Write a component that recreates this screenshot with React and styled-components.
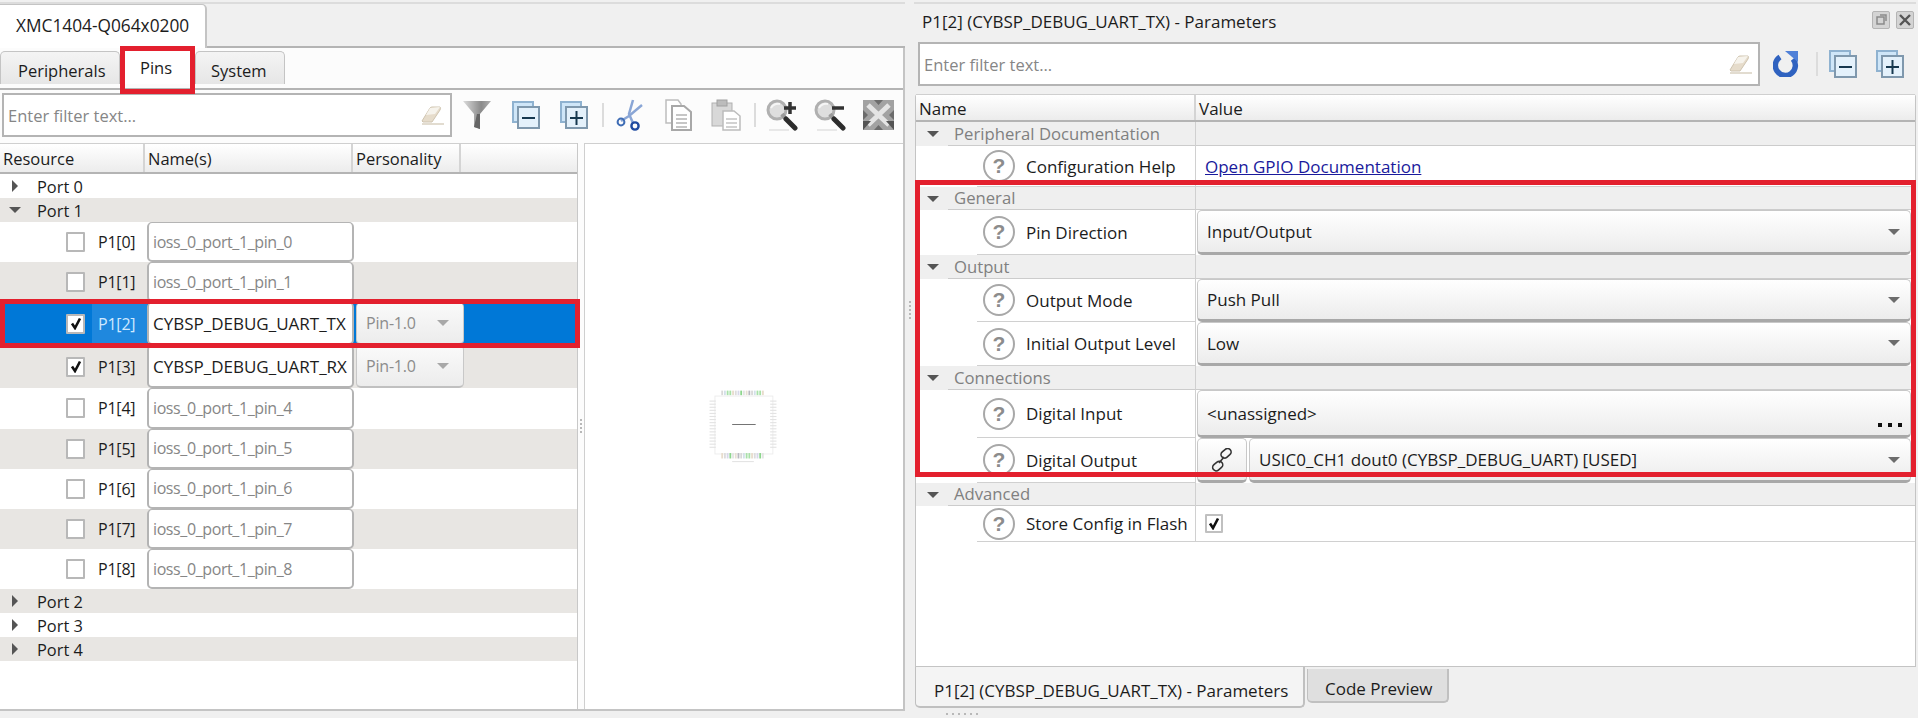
import React from "react";
import styled, { createGlobalStyle } from "styled-components";

const FONT = `"Open Sans", "Noto Sans", "Liberation Sans", sans-serif`;
const RED = "#e3202e";

const GlobalStyle = createGlobalStyle`
  html, body { margin: 0; padding: 0; background: #f0f0f0; }
  * { box-sizing: border-box; }
`;

const Page = styled.div`
  position: relative;
  width: 1918px;
  height: 718px;
  overflow: hidden;
  display: flex;
  background: #f0f0f0;
  font-family: ${FONT};
  font-size: 17px;
  color: #1c1c1c;
  padding-top: 2px;
`;

const Highlight = styled.div`
  position: absolute;
  left: ${(p) => p.$x}px;
  top: ${(p) => p.$y}px;
  width: ${(p) => p.$w}px;
  height: ${(p) => p.$h}px;
  border: 5px solid ${RED};
  pointer-events: none;
  z-index: 10;
`;

/* left side */
const LeftPanel = styled.div`
  width: 905px;
  height: 709px;
  display: flex;
  flex-direction: column;
  border-top: 2px solid #dcdcdc;
`;

const EditorTabBar = styled.div`
  height: 44px;
  flex: none;
  display: flex;
  border-bottom: 2px solid #b4b4b4;
`;

const EditorTab = styled.div`
  width: 207px;
  height: 44px;
  background: #fff;
  border: 1px solid #c4c4c4;
  border-width: 1px 2px 0 0;
  border-top-right-radius: 5px;
  padding: 9px 0 0 16px;
  font-size: 17.3px;
`;

const LeftBody = styled.div`
  flex: 1;
  display: flex;
  flex-direction: column;
  background: #fcfcfc;
  border-right: 2px solid #c4c4c4;
  border-bottom: 2px solid #c4c4c4;
  min-height: 0;
`;

const SubTabBar = styled.div`
  height: 42px;
  flex: none;
  display: flex;
  align-items: flex-end;
  padding-bottom: 4px;
  border-bottom: 2px solid #b4b4b4;
`;

const SubTab = styled.div`
  width: ${(p) => p.$w}px;
  height: ${(p) => (p.$active ? 37 : 33)}px;
  padding: ${(p) => (p.$active ? "9px" : "7px")} 0 0 ${(p) => p.$pad}px;
  background: ${(p) => (p.$active ? "#fff" : "linear-gradient(#f4f4f4, #e6e6e6)")};
  border: ${(p) => (p.$active ? "0" : "1px solid #c4c4c4")};
  border-bottom: 0;
  border-radius: 5px 5px 0 0;
  font-size: 16.5px;
`;

const ToolRow = styled.div`
  display: flex;
  align-items: flex-start;
  flex: none;
  padding: 3px 0 0 2px;
  height: 53px;
`;

const FilterBox = styled.div`
  width: ${(p) => p.$w}px;
  height: 44px;
  flex: none;
  background: #fff;
  border: 2px solid #b4b4b4;
  display: flex;
  align-items: center;
  justify-content: space-between;
  padding: 0 6px 0 4px;
  color: #868686;
  font-size: 16.5px;
`;

const ToolIcon = styled.div`
  width: ${(p) => p.$w || 48}px;
  height: 44px;
  flex: none;
  display: flex;
  align-items: center;
  justify-content: center;
`;

const ToolSep = styled.div`
  width: 2px;
  height: 24px;
  margin: 10px 2px 0 4px;
  flex: none;
  background: #dcdcdc;
`;

const Workspace = styled.div`
  flex: 1;
  display: flex;
  min-height: 0;
`;

const Tree = styled.div`
  width: 578px;
  flex: none;
  background: #fff;
  border-right: 1px solid #c8c8c8;
  display: flex;
  flex-direction: column;
`;

const HeaderRow = styled.div`
  height: 31px;
  flex: none;
  display: flex;
  background: linear-gradient(#fff, #ececec);
  border-top: 1px solid #cfcfcf;
  border-bottom: 2px solid #b4b4b4;
`;

const HeaderCell = styled.div`
  width: ${(p) => p.$w}px;
  padding-left: ${(p) => p.$pad ?? 3}px;
  border-right: ${(p) => (p.$last ? "0" : "2px solid #d4d4d4")};
  font-size: 16.5px;
  line-height: 30px;
  flex: ${(p) => (p.$last ? 1 : "none")};
`;

const PortRow = styled.div`
  height: 24px;
  flex: none;
  display: flex;
  align-items: center;
  padding-left: ${(p) => (p.$open ? 9 : 12)}px;
  background: ${(p) => (p.$alt ? "#e8e6e3" : "#fff")};
  font-size: 16.4px;
`;

const PortLabel = styled.span`
  margin-left: ${(p) => (p.$open ? 16 : 19)}px;
`;

const Arrow = styled.span`
  display: block;
  width: 0;
  height: 0;
  border-left: 6px solid #555;
  border-top: 6px solid transparent;
  border-bottom: 6px solid transparent;
`;

const ArrowDown = styled.span`
  display: block;
  width: 0;
  height: 0;
  border-top: 6px solid #555;
  border-left: 6px solid transparent;
  border-right: 6px solid transparent;
`;

const PinRowBox = styled.div`
  height: ${(p) => (p.$tall ? 43 : 40.2)}px;
  flex: none;
  display: flex;
  align-items: center;
  background: ${(p) => (p.$selected ? "#0078d7" : p.$alt ? "#e8e6e3" : "#fff")};
`;

const CheckCell = styled.div`
  width: 92px;
  flex: none;
  display: flex;
  justify-content: flex-end;
  padding-right: 7px;
`;

const CheckBox = styled.span`
  width: 19px;
  height: 20px;
  display: flex;
  align-items: center;
  justify-content: center;
  background: #fff;
  border: 2px solid #b8b8b8;
  border-radius: 1px;
`;

const PinLabel = styled.div`
  width: 55px;
  height: 100%;
  flex: none;
  padding-left: 6px;
  display: flex;
  align-items: center;
  font-size: 16px;
  letter-spacing: -0.2px;
  color: ${(p) => (p.$selected ? "#cfe8ff" : "#1c1c1c")};
  background: ${(p) => (p.$selected ? "#1f88de" : "transparent")};
`;

const NameInput = styled.div`
  width: 207px;
  height: 100%;
  flex: none;
  background: #fff;
  border: 2px solid #b4b4b4;
  border-width: 1px 2px 2px 2px;
  border-radius: 5px;
  padding-left: 4px;
  display: flex;
  align-items: center;
  font-size: ${(p) => (p.$used ? 17 : 16)}px;
  letter-spacing: ${(p) => (p.$used ? 0 : -0.4)}px;
  white-space: nowrap;
  overflow: hidden;
  color: ${(p) => (p.$used ? "#1c1c1c" : "#868686")};
`;

const PinSelect = styled.div`
  width: 108px;
  height: 100%;
  margin-left: 2px;
  flex: none;
  background: linear-gradient(#fafafa, #ececec);
  border: 1px solid #c8c8c8;
  border-bottom: 2px solid #c0c0c0;
  border-radius: 5px;
  padding: 0 14px 0 9px;
  display: flex;
  align-items: center;
  justify-content: space-between;
  font-size: 16px;
  letter-spacing: -0.2px;
  color: #8c8c8c;
`;

const Caret = styled.span`
  width: 0;
  height: 0;
  border-top: 6px solid ${(p) => p.$color || "#6c6c6c"};
  border-left: 6px solid transparent;
  border-right: 6px solid transparent;
`;

const SplitDots = styled.div`
  width: ${(p) => p.$w}px;
  flex: none;
  display: flex;
  flex-direction: column;
  align-items: center;
  justify-content: center;
  gap: 2px;
  padding-bottom: ${(p) => p.$up || 0}px;
`;

const Dot = styled.span`
  width: 2px;
  height: 2px;
  background: #b8b8b8;
`;

const Preview = styled.div`
  flex: 1;
  background: #fff;
  border-top: 1px solid #cfcfcf;
  border-left: 1px solid #cfcfcf;
  display: flex;
  align-items: center;
  justify-content: center;
  padding-right: 2px;
  padding-bottom: 4px;
`;

/* right side */
const RightPanel = styled.div`
  flex: 1;
  height: 716px;
  display: flex;
  flex-direction: column;
  border-top: 2px solid #dcdcdc;
  margin-right: 2px;
`;

const RightTitleBar = styled.div`
  height: 35px;
  flex: none;
  display: flex;
  align-items: center;
  justify-content: space-between;
  padding: 0 0 0 8px;
  font-size: 17px;
`;

const WindowButtons = styled.div`
  display: flex;
  gap: 6px;
  margin-top: -4px;
  margin-right: 2px;
`;

const WindowButton = styled.div`
  width: 18px;
  height: 18px;
  background: #d4d4d4;
  border: 1px solid #b4b4b4;
  border-radius: 2px;
  display: flex;
  align-items: center;
  justify-content: center;
`;

const RightTools = styled.div`
  height: 55px;
  flex: none;
  display: flex;
  padding: 3px 0 0 4px;
`;

const ParamTable = styled.div`
  height: 573px;
  flex: none;
  background: #fff;
  border: 1px solid #c4c4c4;
  border-top: 0;
  border-radius: 3px 3px 0 0;
  display: flex;
  flex-direction: column;
  margin-left: 1px;
`;

const ParamHeader = styled(HeaderRow)`
  height: 28px;
`;

const ParamHeaderCell = styled(HeaderCell)`
  font-size: 17px;
  line-height: 27px;
`;

const GroupRow = styled.div`
  height: ${(p) => p.$h}px;
  flex: none;
  display: flex;
  background: #efefef;
`;

const GroupName = styled.div`
  width: 280px;
  flex: none;
  display: flex;
  align-items: center;
  padding-left: 11px;
  color: #808080;
  font-size: 16.7px;
  border-right: 1px solid #d0d0d0;
`;

const GroupText = styled.div`
  height: 100%;
  flex: 1;
  margin-left: 9px;
  padding-left: 6px;
  line-height: ${(p) => p.$h - 1}px;
  border-bottom: 1px solid #cccccc;
`;

const GroupFill = styled.div`
  flex: 1;
  border-bottom: 1px solid #cccccc;
`;

const ParamRow = styled.div`
  height: ${(p) => p.$h}px;
  flex: none;
  display: flex;
`;

const ParamName = styled.div`
  width: 280px;
  flex: none;
  display: flex;
  align-items: stretch;
  padding-left: 61px;
  border-right: 1px solid #d0d0d0;
`;

const ParamNameInner = styled.div`
  flex: 1;
  display: flex;
  align-items: center;
  gap: 11px;
  padding-left: 6px;
  white-space: nowrap;
  border-bottom: 1px solid #d0d0d0;
`;

const HelpIcon = styled.span`
  width: 32px;
  height: 32px;
  flex: none;
  border-radius: 50%;
  border: 2px solid #a8a8a8;
  display: flex;
  align-items: center;
  justify-content: center;
  font-weight: 700;
  font-size: 21px;
  color: #8c8c8c;
  font-family: "Liberation Sans", sans-serif;
`;

const ParamValue = styled.div`
  flex: 1;
  display: flex;
  align-items: center;
  gap: 2px;
  padding: 0 4px 0 ${(p) => p.$pad ?? 1}px;
  border-bottom: ${(p) => (p.$line ? "1px solid #d0d0d0" : "0")};
`;

const DocLink = styled.a`
  color: #1a1a9c;
  text-decoration: underline;
`;

const Combo = styled.div`
  flex: 1;
  height: 100%;
  background: linear-gradient(#fff, #ececec);
  border: 1px solid #c8c8c8;
  border-bottom: 3px solid #a8a8a8;
  border-radius: 5px;
  display: flex;
  align-items: center;
  justify-content: space-between;
  padding: 0 10px 0 9px;
  position: relative;
`;

const LinkButton = styled.div`
  width: 50px;
  height: 100%;
  flex: none;
  background: linear-gradient(#fff, #ececec);
  border: 1px solid #c8c8c8;
  border-bottom: 3px solid #a8a8a8;
  border-radius: 5px;
  display: flex;
  align-items: center;
  justify-content: center;
`;

const Ellipsis = styled.span`
  position: absolute;
  right: 8px;
  bottom: 8px;
  display: flex;
  gap: 6px;
`;

const EllipsisDot = styled.i`
  width: 4px;
  height: 4px;
  background: #111;
`;

const SmallCheck = styled(CheckBox)`
  width: 18px;
  height: 19px;
  margin-left: 9px;
  border-color: #c0c0c0;
`;

const BottomTabs = styled.div`
  display: flex;
  align-items: flex-start;
  padding-left: 1px;
  flex: none;
`;

const BottomTab = styled.div`
  height: ${(p) => (p.$active ? 41 : 34)}px;
  width: ${(p) => p.$w}px;
  margin-left: ${(p) => (p.$active ? 0 : 2)}px;
  margin-top: ${(p) => (p.$active ? 0 : 2)}px;
  padding: ${(p) => (p.$active ? "12px 0 0 18px" : "8px 0 0 17px")};
  background: ${(p) => (p.$active ? "#f4f4f4" : "#dfdfdf")};
  border: 1px solid #c0c0c0;
  border-width: 0 2px 2px 1px;
  border-radius: 0 0 5px 5px;
`;

const GripRow = styled.div`
  display: flex;
  gap: 4px;
  margin: 5px 0 0 32px;
`;

/* icons */
const Eraser = () => (
  <svg width="24" height="22" viewBox="0 0 24 22">
    <path d="M2 17 L10 4 Q11 3 12 3 L20 3 Q21 4 20 6 L12 18 L3 18 Z" fill="#e6dccb" stroke="#cfc4b0" />
    <path d="M10 4 L20 3 L15 10 L6 11 Z" fill="#f6f3ec" />
    <path d="M2 20 H24" stroke="#d8d0c0" strokeWidth="1.5" />
  </svg>
);

const Funnel = () => (
  <svg width="30" height="30" viewBox="0 0 30 30">
    <defs>
      <linearGradient id="fun" x1="0" x2="1">
        <stop offset="0" stopColor="#dcdcdc" />
        <stop offset="0.65" stopColor="#8a8a8a" />
        <stop offset="1" stopColor="#b0b0b0" />
      </linearGradient>
    </defs>
    <path d="M1 1 H29 L18 14 V29 L12 27 V14 Z" fill="url(#fun)" />
    <path d="M12 27 L18 29 V14 H15 Z" fill="#666" />
  </svg>
);

const Stack = ({ plus }) => (
  <svg width="28" height="28" viewBox="0 0 28 28">
    <rect x="1" y="1" width="20" height="20" fill="#cfe6f8" stroke="#8fb2d0" strokeWidth="2" />
    <rect x="6" y="6" width="21" height="21" fill="#e4f1fb" stroke="#7f98ad" strokeWidth="2" />
    <path d="M10 17 H23" stroke="#16384f" strokeWidth="2" />
    {plus && <path d="M16.5 10 V24" stroke="#16384f" strokeWidth="2" />}
  </svg>
);

const Scissors = () => (
  <svg width="28" height="32" viewBox="0 0 28 32">
    <path d="M17 1 L13 15 L17 24" stroke="#8aa6d6" strokeWidth="2.5" fill="none" />
    <path d="M26 6 L13 17 L5 22" stroke="#8aa6d6" strokeWidth="2.5" fill="none" />
    <circle cx="5" cy="23" r="3.4" stroke="#3f6db5" strokeWidth="2" fill="none" />
    <circle cx="19" cy="27" r="3.6" stroke="#1f4aa0" strokeWidth="2.4" fill="none" />
  </svg>
);

const Copy = () => (
  <svg width="28" height="32" viewBox="0 0 28 32">
    <path d="M2 1 H14 L17 5 V24 H2 Z" fill="#fff" stroke="#bdbdbd" strokeWidth="1.5" />
    <path d="M8 7 H20 L27 13 V31 H8 Z" fill="#fff" stroke="#a8a8a8" strokeWidth="2" />
    <path d="M12 16 H23 M12 20 H23 M12 24 H23 M12 28 H23" stroke="#b4b4b4" strokeWidth="1.5" />
  </svg>
);

const Paste = () => (
  <svg width="30" height="32" viewBox="0 0 30 32">
    <rect x="1" y="4" width="20" height="23" fill="#d8d8d8" stroke="#b0b0b0" />
    <rect x="6" y="1" width="10" height="6" fill="#bcbcbc" stroke="#a0a0a0" />
    <path d="M12 12 H23 L29 17 V31 H12 Z" fill="#fff" stroke="#bcbcbc" strokeWidth="1.5" />
    <path d="M15 20 H26 M15 24 H26 M15 28 H26" stroke="#c4c4c4" strokeWidth="1.5" />
  </svg>
);

const Magnifier = ({ plus }) => (
  <svg width="34" height="32" viewBox="0 0 34 32">
    <path d="M4 31 H24" stroke="#e2e2e2" strokeWidth="1.5" />
    <circle cx="12" cy="11" r="9" fill="#dedede" stroke="#b0b0b0" strokeWidth="3" />
    <path d="M6 9 Q9 4 15 5" stroke="#f6f6f6" strokeWidth="2" fill="none" />
    <path d="M17 15 L20 19" stroke="#9a9a9a" strokeWidth="4" />
    <path d="M21 20 L30 29" stroke="#2c2c2c" strokeWidth="5" strokeLinecap="round" />
    <path d="M19 9 H31" stroke="#333" strokeWidth="3.5" />
    {plus && <path d="M25 3 V15" stroke="#333" strokeWidth="3.5" />}
  </svg>
);

const FitArrows = () => (
  <svg width="33" height="32" viewBox="0 0 33 32">
    <rect x="1" y="1" width="31" height="30" fill="#6c6c6c" />
    <path d="M1 1 H12 L16.5 6 L21 1 H32 V11 L27 16 L32 21 V31 H21 L16.5 26 L12 31 H1 V21 L6 16 L1 11 Z" fill="#a2a2a2" />
    <path d="M6 6 L27 26 M27 6 L6 26" stroke="#e4e4e4" strokeWidth="5" />
    <path d="M1 22 H9 L1 31 Z M32 22 H24 L32 31 Z" fill="#555" />
  </svg>
);

const Refresh = () => (
  <svg width="26" height="26" viewBox="0 0 26 26">
    <path d="M7 6 A10 10 0 1 0 20 8" stroke="#2f62c0" strokeWidth="5.5" fill="none" />
    <path d="M12 0 H25 V11 Z" fill="#4f80d8" />
  </svg>
);

const ChainIcon = () => (
  <svg width="22" height="24" viewBox="0 0 22 24">
    <g stroke="#333" strokeWidth="1.6" fill="none">
      <rect x="10" y="2" width="11" height="7" rx="3.5" transform="rotate(-40 15 6)" />
      <rect x="1" y="15" width="11" height="7" rx="3.5" transform="rotate(-40 6 18)" />
      <path d="M8 15 L13 9" />
    </g>
  </svg>
);

const TinyGlyph = ({ close }) => (
  <svg width="12" height="12" viewBox="0 0 12 12">
    {close ? (
      <path d="M1 1 L11 11 M11 1 L1 11" stroke="#555" strokeWidth="2.4" />
    ) : (
      <path d="M2 3 H9 V10 H2 Z M5 1 H11 V7" stroke="#8a8a8a" strokeWidth="1.5" fill="none" />
    )}
  </svg>
);

const CheckMark = () => (
  <svg width="12" height="13" viewBox="0 0 12 13">
    <path d="M2 6.5 L5 11 L10 1.5" stroke="#111" strokeWidth="2.6" fill="none" />
  </svg>
);

const PIN_COLORS = ["#d8d8d8", "#d4dfea", "#a8e0a8", "#a8e0a8", "#e8dccc", "#dcdcdc", "#d8d8ea", "#8cd68c", "#e4e4e4", "#e8e0d4", "#b8b8c0"];

const ChipDiagram = () => {
  const along = Array.from({ length: 16 }, (_, i) => i);
  return (
    <svg width="70" height="76" viewBox="0 0 76 84">
      <rect x="7" y="10" width="64" height="64" fill="#fff" stroke="#ececec" />
      {along.map((i) => (
        <g key={i}>
          <rect x={14 + i * 3} y="4" width="2" height="5" fill={PIN_COLORS[i % 11]} />
          <rect x={14 + i * 3} y="73" width="2" height="6" fill={PIN_COLORS[(i + 4) % 11]} />
          <rect x="1" y={15 + i * 3.4} width="7" height="1.2" fill="#e2e2e2" />
          <rect x="68" y={15 + i * 3.4} width="7" height="1.2" fill="#e2e2e2" />
        </g>
      ))}
      <rect x="26" y="41" width="26" height="1" fill="#666" />
      <rect x="26" y="82" width="24" height="1" fill="#dedede" />
    </svg>
  );
};

const PINS = [
  { id: "P1[0]", name: "ioss_0_port_1_pin_0" },
  { id: "P1[1]", name: "ioss_0_port_1_pin_1", alt: true },
  { id: "P1[2]", name: "CYBSP_DEBUG_UART_TX", used: true, selected: true },
  { id: "P1[3]", name: "CYBSP_DEBUG_UART_RX", used: true, alt: true },
  { id: "P1[4]", name: "ioss_0_port_1_pin_4" },
  { id: "P1[5]", name: "ioss_0_port_1_pin_5", alt: true },
  { id: "P1[6]", name: "ioss_0_port_1_pin_6" },
  { id: "P1[7]", name: "ioss_0_port_1_pin_7", alt: true },
  { id: "P1[8]", name: "ioss_0_port_1_pin_8" },
];

const PinRow = ({ pin }) => (
  <PinRowBox $alt={pin.alt} $selected={pin.selected} $tall={pin.used}>
    <CheckCell>
      <CheckBox>{pin.used && <CheckMark />}</CheckBox>
    </CheckCell>
    <PinLabel $selected={pin.selected}>{pin.id}</PinLabel>
    <NameInput $used={pin.used}>{pin.name}</NameInput>
    {pin.used && (
      <PinSelect>
        Pin-1.0
        <Caret $color="#a8a8a8" />
      </PinSelect>
    )}
  </PinRowBox>
);

const Group = ({ h = 23, children }) => (
  <GroupRow $h={h}>
    <GroupName>
      <ArrowDown />
      <GroupText $h={h}>{children}</GroupText>
    </GroupName>
    <GroupFill />
  </GroupRow>
);

const Param = ({ h, label, children, line, pad }) => (
  <ParamRow $h={h}>
    <ParamName>
      <ParamNameInner>
        <HelpIcon>?</HelpIcon>
        {label}
      </ParamNameInner>
    </ParamName>
    <ParamValue $line={line} $pad={pad}>{children}</ParamValue>
  </ParamRow>
);

export default function App() {
  return (
    <Page>
      <GlobalStyle />
      <LeftPanel>
        <EditorTabBar>
          <EditorTab>XMC1404-Q064x0200</EditorTab>
        </EditorTabBar>
        <LeftBody>
          <SubTabBar>
            <SubTab $w={120} $pad={17}>Peripherals</SubTab>
            <SubTab $w={75} $pad={20} $active>Pins</SubTab>
            <SubTab $w={90} $pad={15}>System</SubTab>
          </SubTabBar>
          <ToolRow>
            <FilterBox $w={450}>
              Enter filter text...
              <Eraser />
            </FilterBox>
            <ToolIcon $w={50}><Funnel /></ToolIcon>
            <ToolIcon><Stack /></ToolIcon>
            <ToolIcon><Stack plus /></ToolIcon>
            <ToolSep />
            <ToolIcon><Scissors /></ToolIcon>
            <ToolIcon><Copy /></ToolIcon>
            <ToolIcon><Paste /></ToolIcon>
            <ToolSep />
            <ToolIcon><Magnifier plus /></ToolIcon>
            <ToolIcon><Magnifier /></ToolIcon>
            <ToolIcon><FitArrows /></ToolIcon>
          </ToolRow>
          <Workspace>
            <Tree>
              <HeaderRow>
                <HeaderCell $w={145}>Resource</HeaderCell>
                <HeaderCell $w={208}>Name(s)</HeaderCell>
                <HeaderCell $w={108}>Personality</HeaderCell>
                <HeaderCell $last />
              </HeaderRow>
              <PortRow><Arrow /><PortLabel>Port 0</PortLabel></PortRow>
              <PortRow $alt $open><ArrowDown /><PortLabel $open>Port 1</PortLabel></PortRow>
              {PINS.map((pin) => (
                <PinRow key={pin.id} pin={pin} />
              ))}
              <PortRow $alt><Arrow /><PortLabel>Port 2</PortLabel></PortRow>
              <PortRow><Arrow /><PortLabel>Port 3</PortLabel></PortRow>
              <PortRow $alt><Arrow /><PortLabel>Port 4</PortLabel></PortRow>
            </Tree>
            <SplitDots $w={6}>
              <Dot /><Dot /><Dot /><Dot />
            </SplitDots>
            <Preview>
              <ChipDiagram />
            </Preview>
          </Workspace>
        </LeftBody>
      </LeftPanel>

      <SplitDots $w={9} $up={100}>
        <Dot /><Dot /><Dot /><Dot /><Dot />
      </SplitDots>

      <RightPanel>
        <RightTitleBar>
          P1[2] (CYBSP_DEBUG_UART_TX) - Parameters
          <WindowButtons>
            <WindowButton><TinyGlyph /></WindowButton>
            <WindowButton><TinyGlyph close /></WindowButton>
          </WindowButtons>
        </RightTitleBar>
        <RightTools>
          <FilterBox $w={842}>
            Enter filter text...
            <Eraser />
          </FilterBox>
          <ToolIcon $w={52}><Refresh /></ToolIcon>
          <ToolSep />
          <ToolIcon $w={46}><Stack /></ToolIcon>
          <ToolIcon $w={48}><Stack plus /></ToolIcon>
        </RightTools>
        <ParamTable>
          <ParamHeader>
            <ParamHeaderCell $w={280}>Name</ParamHeaderCell>
            <ParamHeaderCell $last>Value</ParamHeaderCell>
          </ParamHeader>
          <Group h={24}>Peripheral Documentation</Group>
          <Param h={41} label="Configuration Help" pad={9} line>
            <DocLink href="#">Open GPIO Documentation</DocLink>
          </Param>
          <Group>General</Group>
          <Param h={45} label="Pin Direction">
            <Combo>Input/Output<Caret /></Combo>
          </Param>
          <Group h={24}>Output</Group>
          <Param h={43} label="Output Mode">
            <Combo>Push Pull<Caret /></Combo>
          </Param>
          <Param h={44} label="Initial Output Level">
            <Combo>Low<Caret /></Combo>
          </Param>
          <Group h={24}>Connections</Group>
          <Param h={48} label="Digital Input">
            <Combo>
              &lt;unassigned&gt;
              <Ellipsis><EllipsisDot /><EllipsisDot /><EllipsisDot /></Ellipsis>
            </Combo>
          </Param>
          <Param h={45} label="Digital Output">
            <LinkButton><ChainIcon /></LinkButton>
            <Combo>USIC0_CH1 dout0 (CYBSP_DEBUG_UART) [USED]<Caret /></Combo>
          </Param>
          <Group>Advanced</Group>
          <Param h={36} label="Store Config in Flash" line pad={0}>
            <SmallCheck><CheckMark /></SmallCheck>
          </Param>
        </ParamTable>
        <BottomTabs>
          <BottomTab $active $w={390}>P1[2] (CYBSP_DEBUG_UART_TX) - Parameters</BottomTab>
          <BottomTab $w={142}>Code Preview</BottomTab>
        </BottomTabs>
        <GripRow>
          <Dot /><Dot /><Dot /><Dot /><Dot /><Dot />
        </GripRow>
      </RightPanel>

      <Highlight $x={120} $y={46} $w={75} $h={48} />
      <Highlight $x={0} $y={299} $w={580} $h={49} />
      <Highlight $x={915} $y={180} $w={1001} $h={297} />
    </Page>
  );
}
